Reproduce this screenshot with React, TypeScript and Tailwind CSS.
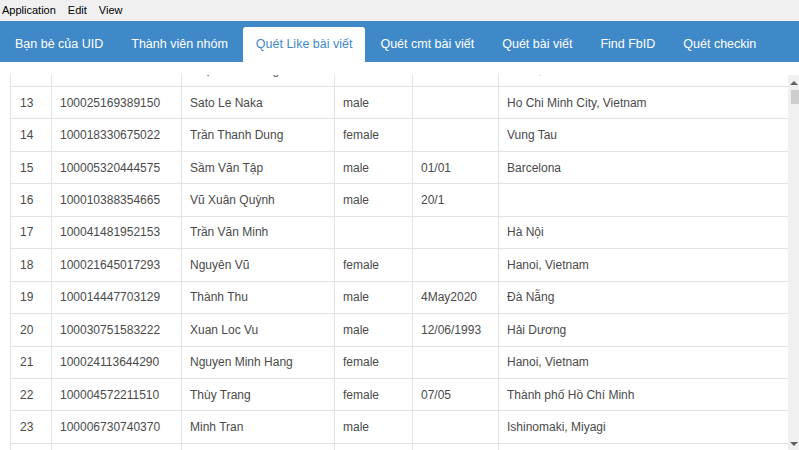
import React from 'react'

const TABS = ['Bạn bè của UID', 'Thành viên nhóm', 'Quét Like bài viết', 'Quét cmt bài viết', 'Quét bài viết', 'Find FbID', 'Quét checkin']
const ACTIVE = 2

type Row = [string, string, string, string, string, string]

// row 12 is scrolled almost out of view, only descenders peek through
const ROWS: Row[] = [
  ['', '', 'Phạm Thu Trang', '', '', 'Hanoi, Vietnam'],
  ['13', '100025169389150', 'Sato Le Naka', 'male', '', 'Ho Chi Minh City, Vietnam'],
  ['14', '100018330675022', 'Trần Thanh Dung', 'female', '', 'Vung Tau'],
  ['15', '100005320444575', 'Sầm Văn Tập', 'male', '01/01', 'Barcelona'],
  ['16', '100010388354665', 'Vũ Xuân Quỳnh', 'male', '20/1', ''],
  ['17', '100041481952153', 'Trần Văn Minh', '', '', 'Hà Nội'],
  ['18', '100021645017293', 'Nguyên Vũ', 'female', '', 'Hanoi, Vietnam'],
  ['19', '100014447703129', 'Thành Thu', 'male', '4May2020', 'Đà Nẵng'],
  ['20', '100030751583222', 'Xuan Loc Vu', 'male', '12/06/1993', 'Hải Dương'],
  ['21', '100024113644290', 'Nguyen Minh Hang', 'female', '', 'Hanoi, Vietnam'],
  ['22', '100004572211510', 'Thùy Trang', 'female', '07/05', 'Thành phố Hồ Chí Minh'],
  ['23', '100006730740370', 'Minh Tran', 'male', '', 'Ishinomaki, Miyagi'],
  ['24', '', '', '', '', ''],
]

function MenuBar() {
  return (
    <div className="flex h-[21px] shrink-0 items-center gap-[12px] bg-[#f0f0f0] pl-[2px] text-[11px] text-black">
      <span>Application</span>
      <span>Edit</span>
      <span>View</span>
    </div>
  )
}

function TabBar() {
  return (
    <div className="flex h-[41px] shrink-0 items-end gap-[2px] bg-[#3f89c9] pl-[2px] text-[12.5px]">
      {TABS.map((t, i) => (
        <div
          key={t}
          className={`flex h-[35px] shrink-0 items-center whitespace-nowrap rounded-t-[3px] px-[13px] ${i === ACTIVE ? 'bg-white text-[#3f89c9]' : 'text-white'}`}
        >
          {t}
        </div>
      ))}
    </div>
  )
}

function Scrollbar() {
  return (
    <div className="flex w-[11px] shrink-0 flex-col items-center bg-[#f0f0f0]">
      <div className="mt-[6px] h-0 w-0 border-x-[4px] border-b-[4px] border-x-transparent border-b-[#606060]" />
      <div className="ml-[3px] mt-[5px] h-[14px] w-[8px] bg-[#cdcdcd]" />
      <div className="flex-1" />
      <div className="mb-[4px] h-0 w-0 border-x-[4px] border-t-[4px] border-x-transparent border-t-[#606060]" />
    </div>
  )
}

export default function App() {
  return (
    <div className="flex h-screen w-full flex-col overflow-hidden bg-white font-['Liberation_Sans',Arial,sans-serif]">
      <MenuBar />
      <TabBar />
      <div className="flex min-h-0 flex-1 pt-[13px]">
        <div className="min-w-0 flex-1 overflow-hidden pl-[10px]">
          <div className="-mt-[20.45px] text-[12px] text-[#4a4a4a]">
            {ROWS.map((r, i) => (
              <div key={i} className="grid h-[32.45px] grid-cols-[42px_130px_153px_78px_86px_1fr] border-b border-[#e3e3e3]">
                {r.map((c, j) => (
                  <div
                    key={j}
                    className={`flex items-center whitespace-nowrap border-[#e3e3e3] ${j === 0 ? 'border-x pl-[9px]' : 'border-r pl-[8px]'} ${j === 5 ? 'border-r-0' : ''}`}
                  >
                    {c}
                  </div>
                ))}
              </div>
            ))}
          </div>
        </div>
        <Scrollbar />
      </div>
    </div>
  )
}
